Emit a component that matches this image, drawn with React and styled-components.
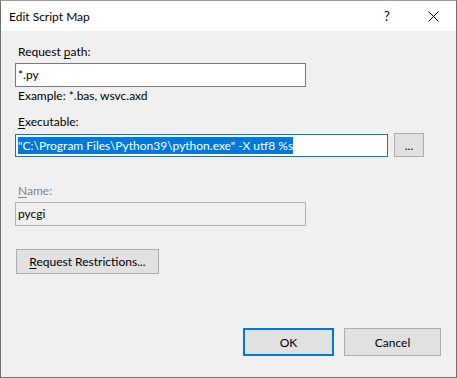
import React from "react";
import styled, { createGlobalStyle } from "styled-components";

const Global = createGlobalStyle`
  html, body {
    margin: 0;
    padding: 0;
    background: #ffffff;
  }
  body {
    font-family: "Segoe UI", Lato, "Noto Sans", sans-serif;
    font-size: 12px;
    color: #000;
  }
`;

const Window = styled.div`
  width: 457px;
  height: 378px;
  box-sizing: border-box;
  border: 1px solid #6f6f6f;
  border-top-color: #9a9a9a;
  display: flex;
  flex-direction: column;
  background: #f0f0f0;
`;

const TitleBar = styled.div`
  height: 30px;
  flex: none;
  background: #ffffff;
  display: flex;
  align-items: center;
  padding-left: 8px;
`;

const Title = styled.span`
  flex: 1;
`;

const TitleButton = styled.div`
  width: 46px;
  height: 30px;
  display: flex;
  align-items: center;
  justify-content: center;
  font-size: 13px;
`;

const Body = styled.div`
  flex: 1;
  display: flex;
  flex-direction: column;
  padding: 13px 15px 0 14px;
`;

const Label = styled.div`
  height: 16px;
  line-height: 16px;
  padding-left: 3px;
  margin-top: ${(p) => p.$top || 0}px;
  color: ${(p) => (p.$disabled ? "#838383" : "#000")};
`;

const Key = styled.span`
  text-decoration: underline;
  text-underline-offset: 2px;
`;

const Row = styled.div`
  display: flex;
  align-items: center;
  gap: 6px;
  margin-top: ${(p) => p.$top || 0}px;
`;

const Field = styled.div`
  width: ${(p) => p.$w}px;
  height: ${(p) => p.$h || 24}px;
  box-sizing: border-box;
  border: 1px solid ${(p) => (p.$focus ? "#0078d7" : p.$disabled ? "#b4b4b4" : "#7a7a7a")};
  background: ${(p) => (p.$disabled ? "#f0f0f0" : "#ffffff")};
  display: flex;
  align-items: center;
  padding-left: 2px;
  line-height: 16px;
  white-space: nowrap;
  overflow: hidden;
`;

const Selected = styled.span`
  background: #0078d7;
  color: #ffffff;
  line-height: 17px;
`;

const Button = styled.div`
  width: ${(p) => p.$w}px;
  height: ${(p) => p.$h || 25}px;
  box-sizing: border-box;
  border: ${(p) => (p.$default ? "2px solid #0078d7" : "1px solid #adadad")};
  background: #e1e1e1;
  display: flex;
  align-items: center;
  justify-content: center;
  margin-top: ${(p) => p.$top || 0}px;
`;

const RestrictButton = styled(Button)`
  margin-left: 1px;
`;

const Footer = styled.div`
  margin-top: auto;
  display: flex;
  justify-content: flex-end;
  gap: 10px;
  padding: 0 0 21px 0;
`;

const CloseIcon = () => (
  <svg width="11" height="11" viewBox="0 0 11 11">
    <path d="M0.5 0.5 L10.5 10.5 M10.5 0.5 L0.5 10.5" stroke="#000" strokeWidth="1" fill="none" />
  </svg>
);

export default function App() {
  return (
    <>
      <Global />
      <Window>
        <TitleBar>
          <Title>Edit Script Map</Title>
          <TitleButton>?</TitleButton>
          <TitleButton>
            <CloseIcon />
          </TitleButton>
        </TitleBar>
        <Body>
          <Label>
            Request <Key>p</Key>ath:
          </Label>
          <Row $top={3}>
            <Field $w={291}>*.py</Field>
          </Row>
          <Label $top={1}>Example: *.bas, wsvc.axd</Label>
          <Label $top={10}>
            <Key>E</Key>xecutable:
          </Label>
          <Row $top={3}>
            <Field $w={373} $h={23} $focus>
              <Selected>"C:\Program Files\Python39\python.exe" -X utf8 %s</Selected>
            </Field>
            <Button $w={30} $h={24}>...</Button>
          </Row>
          <Label $top={26} $disabled>
            <Key>N</Key>ame:
          </Label>
          <Row $top={3}>
            <Field $w={291} $disabled>pycgi</Field>
          </Row>
          <RestrictButton $w={143} $top={23}>
            <span>
              <Key>R</Key>equest Restrictions...
            </span>
          </RestrictButton>
          <Footer>
            <Button $w={91} $h={28} $default>OK</Button>
            <Button $w={97} $h={28}>Cancel</Button>
          </Footer>
        </Body>
      </Window>
    </>
  );
}
